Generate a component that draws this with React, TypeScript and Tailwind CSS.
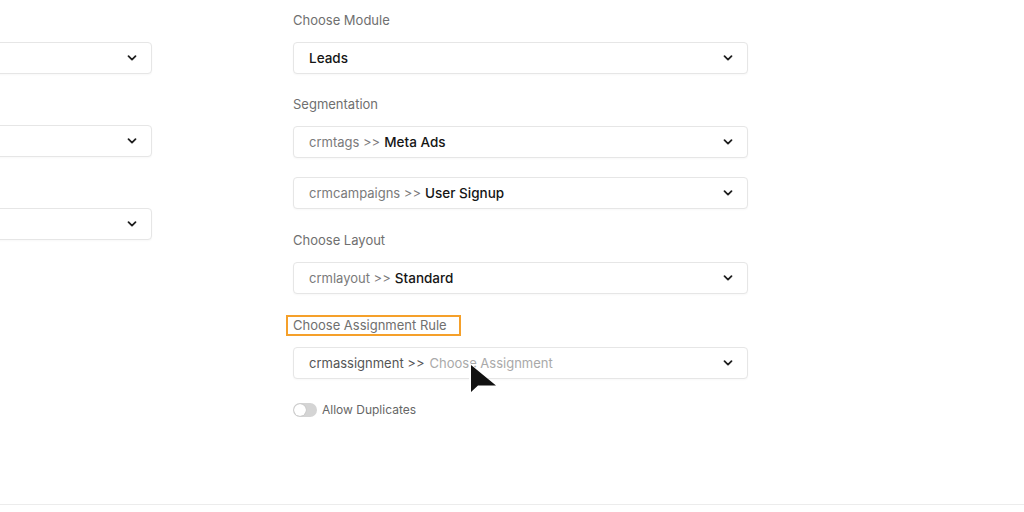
import React from 'react';

const Chevron: React.FC = () => (
  <svg width="12" height="12" viewBox="0 0 12 12" className="shrink-0 text-[#1f1f1f]">
    <path d="M2.5 4.2 L6 7.6 L9.5 4.2" fill="none" stroke="currentColor" strokeWidth="1.8" strokeLinecap="round" strokeLinejoin="round" />
  </svg>
);

const Select: React.FC<{ children?: React.ReactNode; className?: string }> = ({ children, className }) => (
  <div
    className={`h-[32px] flex items-center justify-between pl-[15px] pr-[13px] bg-white border border-[#e6e6e6] rounded-[4px] shadow-[0_1px_2px_rgba(0,0,0,0.03)] ${className ?? ''}`}
  >
    <div className="flex items-baseline whitespace-nowrap pt-[1px]">{children}</div>
    <Chevron />
  </div>
);

const Label: React.FC<{ children: React.ReactNode }> = ({ children }) => (
  <div className="h-[20px] leading-[20px] text-[13px] text-[#6f6f6f]">{children}</div>
);

const Prefix: React.FC<{ children: React.ReactNode }> = ({ children }) => (
  <span className="text-[13px] text-[#7a7a7a] mr-[4px]">{children}</span>
);

const Value: React.FC<{ children: React.ReactNode }> = ({ children }) => (
  <span className="text-[13.5px] text-[#151515] font-medium">{children}</span>
);

export default function App() {
  return (
    <div
      className="relative w-[1024px] h-[512px] bg-white overflow-hidden"
      style={{ fontFamily: 'Inter, "Noto Sans", sans-serif' }}
    >
      <div className="flex">
        {/* left column, cut off by the window edge */}
        <div className="w-[172px] -ml-[20px] pt-[42px] flex flex-col gap-[51px] shrink-0">
          <Select />
          <Select />
          <Select />
        </div>

        {/* right column */}
        <div className="ml-[141px] w-[455px] pt-[10px] flex flex-col">
          <Label>Choose Module</Label>
          <Select className="mt-[12px]">
            <Value>Leads</Value>
          </Select>

          <div className="mt-[20px]">
            <Label>Segmentation</Label>
          </div>
          <Select className="mt-[12px]">
            <Prefix>crmtags &gt;&gt;</Prefix>
            <Value>Meta Ads</Value>
          </Select>
          <Select className="mt-[19px]">
            <Prefix>crmcampaigns &gt;&gt;</Prefix>
            <Value>User Signup</Value>
          </Select>

          <div className="mt-[21px]">
            <Label>Choose Layout</Label>
          </div>
          <Select className="mt-[12px]">
            <Prefix>crmlayout &gt;&gt;</Prefix>
            <Value>Standard</Value>
          </Select>

          <div className="mt-[21px] self-start -ml-[7px] h-[21px] border-2 border-[#f5a02a] pl-[5px] pr-[12px] flex items-center">
            <span className="text-[13px] text-[#6f6f6f] leading-none">Choose Assignment Rule</span>
          </div>
          <Select className="mt-[11px]">
            <span className="text-[13px] text-[#555555] mr-[5px]">crmassignment &gt;&gt;</span>
            <span className="text-[13px] text-[#a9a9a9]">Choose Assignment</span>
          </Select>

          <div className="mt-[22px] flex items-center gap-[5px]">
            <div className="w-[24px] h-[14px] rounded-full bg-[#d4d4d4] flex items-center p-[1px]">
              <div className="w-[12px] h-[12px] rounded-full bg-white shadow-[0_0_1px_rgba(0,0,0,0.3)]" />
            </div>
            <span className="text-[12px] text-[#666666]">Allow Duplicates</span>
          </div>
        </div>
      </div>

      {/* bottom divider */}
      <div className="absolute left-0 right-0 top-[504px] border-t border-[#ececec]" />

      {/* mouse cursor */}
      <svg className="absolute left-[466px] top-[360px]" width="36" height="42" viewBox="0 0 36 42">
        <path d="M3 2 L3 36 L11 29 L14 38 L19 36 L16 27 L31 27 Z" fill="#ffffff" opacity="0.9" />
        <path d="M5 5 L5 32 L12 25.5 L30 25.5 Z" fill="#111111" />
      </svg>
    </div>
  );
}
